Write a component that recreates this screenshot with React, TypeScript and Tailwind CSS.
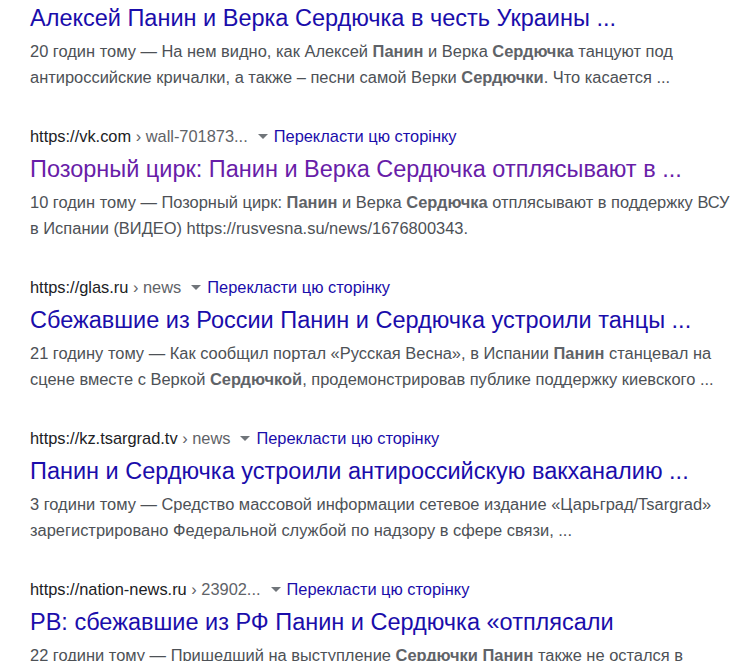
import React from "react";

type Seg = { t: string; b?: boolean };
type Result = {
  site?: string;
  path?: string;
  title: string;
  visited?: boolean;
  lines: Seg[][];
};

const results: Result[] = [
  {
    title: "Алексей Панин и Верка Сердючка в честь Украины ...",
    lines: [
      [
        { t: "20 годин тому — На нем видно, как Алексей " },
        { t: "Панин", b: true },
        { t: " и Верка " },
        { t: "Сердючка", b: true },
        { t: " танцуют под" },
      ],
      [
        { t: "антироссийские кричалки, а также – песни самой Верки " },
        { t: "Сердючки", b: true },
        { t: ". Что касается ..." },
      ],
    ],
  },
  {
    site: "https://vk.com",
    path: "wall-701873...",
    title: "Позорный цирк: Панин и Верка Сердючка отплясывают в ...",
    visited: true,
    lines: [
      [
        { t: "10 годин тому — Позорный цирк: " },
        { t: "Панин", b: true },
        { t: " и Верка " },
        { t: "Сердючка", b: true },
        { t: " отплясывают в поддержку ВСУ" },
      ],
      [{ t: "в Испании (ВИДЕО) https://rusvesna.su/news/1676800343." }],
    ],
  },
  {
    site: "https://glas.ru",
    path: "news",
    title: "Сбежавшие из России Панин и Сердючка устроили танцы ...",
    lines: [
      [
        { t: "21 годину тому — Как сообщил портал «Русская Весна», в Испании " },
        { t: "Панин", b: true },
        { t: " станцевал на" },
      ],
      [
        { t: "сцене вместе с Веркой " },
        { t: "Сердючкой", b: true },
        { t: ", продемонстрировав публике поддержку киевского ..." },
      ],
    ],
  },
  {
    site: "https://kz.tsargrad.tv",
    path: "news",
    title: "Панин и Сердючка устроили антироссийскую вакханалию ...",
    lines: [
      [{ t: "3 години тому — Средство массовой информации сетевое издание «Царьград/Tsargrad»" }],
      [{ t: "зарегистрировано Федеральной службой по надзору в сфере связи, ..." }],
    ],
  },
  {
    site: "https://nation-news.ru",
    path: "23902...",
    title: "РВ: сбежавшие из РФ Панин и Сердючка «отплясали",
    lines: [
      [
        { t: "22 години тому — Пришедший на выступление " },
        { t: "Сердючки", b: true },
        { t: " " },
        { t: "Панин", b: true },
        { t: " также не остался в" },
      ],
    ],
  },
];

export default function App() {
  return (
    <div
      className="w-[740px] h-[661px] overflow-hidden bg-white pl-[30px] pt-[4px]"
      style={{ fontFamily: '"Liberation Sans", Arial, sans-serif' }}
    >
      <div className="flex flex-col gap-[33px]">
        {results.map((r, i) => (
          <div key={i} className="flex flex-col">
            {r.site && (
              <div className="h-[26px] leading-[26px] text-[16.4px] whitespace-nowrap flex items-center">
                <span className="text-[#202124]">{r.site}</span>
                <span className="text-[#5f6368] whitespace-pre">{" › " + r.path}</span>
                <span className="ml-[10px] mr-[6px] inline-block w-0 h-0 border-l-[5px] border-r-[5px] border-t-[5px] border-l-transparent border-r-transparent border-t-[#70757a]" />
                <span className="text-[#1a0dab]">Перекласти цю сторінку</span>
              </div>
            )}
            <div
              className={`${r.site ? "mt-[6px]" : ""} leading-[28px] text-[23.5px] whitespace-nowrap ${
                r.visited ? "text-[#681da8]" : "text-[#1a0dab]"
              }`}
            >
              {r.title}
            </div>
            <div className="mt-[6px] text-[16.45px] leading-[26px] text-[#4d5156]">
              {r.lines.map((line, j) => (
                <div key={j} className="whitespace-nowrap">
                  {line.map((s, k) =>
                    s.b ? (
                      <b key={k} className="font-bold text-[#5f6368]">
                        {s.t}
                      </b>
                    ) : (
                      <span key={k}>{s.t}</span>
                    )
                  )}
                </div>
              ))}
            </div>
          </div>
        ))}
      </div>
    </div>
  );
}
